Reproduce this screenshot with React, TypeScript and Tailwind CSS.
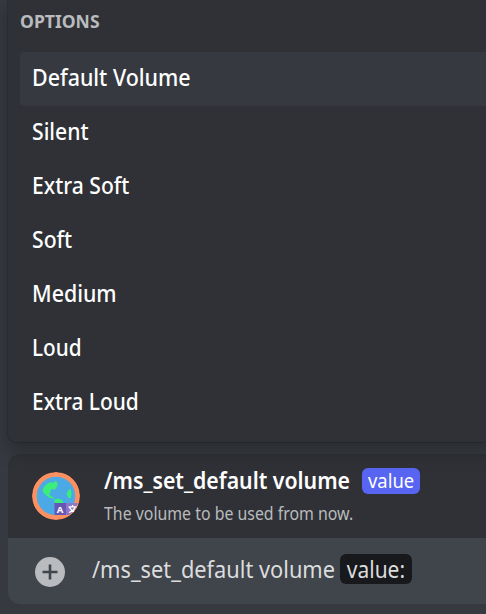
import React from "react";

type Option = { label: string; fit: string };

const options: Option[] = [
  { label: "Default Volume", fit: "scale-x-[0.932]" },
  { label: "Silent", fit: "scale-x-[0.92]" },
  { label: "Extra Soft", fit: "scale-x-[0.917]" },
  { label: "Soft", fit: "scale-x-[0.92]" },
  { label: "Medium", fit: "scale-x-[0.93]" },
  { label: "Loud", fit: "scale-x-[0.9]" },
  { label: "Extra Loud", fit: "scale-x-[0.908]" },
];

function GlobeAvatar() {
  return (
    <svg className="h-12 w-12 shrink-0" viewBox="0 0 48 48">
      <defs>
        <clipPath id="avatar">
          <circle cx="24" cy="24" r="24" />
        </clipPath>
        <clipPath id="badge">
          <circle cx="24" cy="24" r="23" />
        </clipPath>
      </defs>
      <g clipPath="url(#avatar)">
        <circle cx="24" cy="24" r="24" fill="#fc9060" />
        <circle cx="24" cy="24" r="19.3" fill="#4ba9e6" />
        <path
          d="M11 17 Q13 12 19 10 L21 11 L23 9 L25.5 10 L25.5 14 L22.5 18 L20.5 17 L18 18.5 L19 20.5 L17 21.5 L18 23.5 L21 25 L22 27 L17 25.5 L13 22.5 L10.5 19 Z"
          fill="#3bed7b"
        />
        <path d="M22 27.5 L26 26.5 L30 28 L32 31.5 H23 Z" fill="#3bed7b" />
        <path d="M36 18.5 L38.5 17 L39.5 21 L39 26 L36.5 26 L34.5 22 Z" fill="#3bed7b" />
        <g clipPath="url(#badge)">
          <path d="M22.5 31 H34 V43 H22.5 Z" fill="#6757b5" />
          <path d="M34 31 H48 V43 H34 Z" fill="#8c78ca" />
        </g>
        <text x="28" y="40.7" textAnchor="middle" className="fill-white font-['Noto_Sans',sans-serif] text-[9.5px] font-bold">
          A
        </text>
        <path d="M36.5 34.8 H44.5 M40.5 33 V35 M37.5 35 Q39 39 43 40.5 M43 35 Q42 39 37 40.5" stroke="#fff" strokeWidth="1.3" fill="none" />
      </g>
    </svg>
  );
}

export default function App() {
  return (
    <main className="flex h-[614px] w-[486px] flex-col overflow-hidden bg-[#36393f] pl-2 font-['Noto_Sans','Open_Sans',sans-serif]">
      <section className="relative z-10 -mr-2 h-[442px] shrink-0 rounded-bl-lg bg-[#2f3136] pl-3 shadow-[0_0_0_1px_rgba(4,4,5,0.15),0_8px_20px_rgba(0,0,0,0.26)]">
        <h2 className="flex h-[52px] items-start pt-[9px] text-[18px] leading-[25px] font-bold text-[#b9bbbe]">
          <span className="inline-block origin-left scale-x-[0.975]">OPTIONS</span>
        </h2>
        <ul>
          {options.map((option, index) => (
            <li
              key={option.label}
              className={`flex h-[54px] items-center rounded-[4px] pb-[3px] pl-3 text-[23px] font-medium text-white ${index === 0 ? "bg-[#36393f]" : ""}`}
            >
              <span className={`inline-block origin-left ${option.fit}`}>{option.label}</span>
            </li>
          ))}
        </ul>
      </section>

      <section className="mt-3 -mr-2 h-[150px] shrink-0 overflow-hidden rounded-l-xl bg-[#40444b]">
        <div className="flex h-[84px] items-center bg-[#2f3136] pl-6">
          <GlobeAvatar />
          <div className="ml-6 whitespace-nowrap">
            <div className="flex h-[26px] items-center">
              <span className="w-[258px]">
                <span className="inline-block origin-left scale-x-[0.925] text-[23px] font-semibold text-white">/ms_set_default volume</span>
              </span>
              <span className="mt-[2px] flex h-[26px] w-[58px] items-center justify-center rounded-md bg-[#5865f2] text-[20px] text-white">
                <span className="inline-block scale-x-[0.92]">value</span>
              </span>
            </div>
            <p className="mt-2 origin-left scale-x-[0.907] text-[17.5px] leading-6 text-[#b9bbbe]">The volume to be used from now.</p>
          </div>
        </div>
        <div className="flex h-[66px] items-center pl-[27px] whitespace-nowrap text-[23px] text-[#dcddde]">
          <svg className="mt-[2px] h-[30px] w-[30px] shrink-0" viewBox="0 0 30 30">
            <circle cx="15" cy="15" r="15" fill="#b9bbbe" />
            <path d="M15 7.5V22.5M7.5 15H22.5" stroke="#40444b" strokeWidth="2.6" />
          </svg>
          <span className="ml-[27px] w-[248px] pb-[3px]">
            <span className="inline-block origin-left scale-x-[0.948]">/ms_set_default volume</span>
          </span>
          <span className="mb-[4px] flex h-[30px] w-[72px] items-center justify-center rounded-md bg-[#18191c]">
            <span className="inline-block scale-x-[0.91]">value:</span>
          </span>
        </div>
      </section>
    </main>
  );
}
